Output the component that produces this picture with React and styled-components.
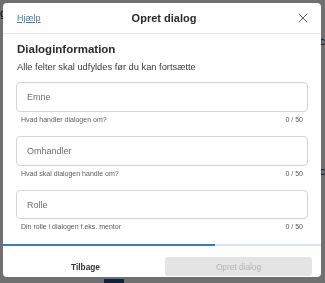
import styled, { createGlobalStyle } from "styled-components";
import { X } from "lucide-react";

const Global = createGlobalStyle`
  html, body {
    margin: 0;
    padding: 0;
    background: #ffffff;
    font-family: "Liberation Sans", Arial, sans-serif;
  }
  * { box-sizing: border-box; }
`;

const Page = styled.div`
  width: 325px;
  height: 283px;
  overflow: hidden;
  background: #ffffff;
  display: flex;
  flex-direction: column;
  padding-top: 7px;
`;

const PageLine = styled.div`
  display: flex;
  justify-content: ${({ $right }) => ($right ? "flex-end" : "flex-start")};
  font-size: 11px;
  line-height: 12px;
  color: #222;
  margin-top: ${({ $gap }) => $gap || 0}px;
`;

const PageButton = styled.div`
  margin: auto 0 0 104px;
  width: 20px;
  height: 4px;
  background: #1f4f8a;
`;

const Overlay = styled.div`
  position: fixed;
  inset: 0;
  background: rgba(0, 0, 0, 0.56);
  padding: 3px 4px 6px 3px;
`;

const Modal = styled.div`
  width: 318px;
  height: 274px;
  background: #ffffff;
  border-radius: 4px;
  display: flex;
  flex-direction: column;
  overflow: hidden;
`;

const Header = styled.div`
  display: grid;
  grid-template-columns: 1fr auto 1fr;
  align-items: center;
  height: 31px;
  padding: 0 10px 0 14px;
  border-bottom: 1px solid #e8e8e8;
  flex-shrink: 0;
`;

const HelpLink = styled.a`
  justify-self: start;
  font-size: 9px;
  color: #3b78c9;
  text-decoration: underline;
  cursor: pointer;
`;

const Title = styled.div`
  font-size: 11px;
  font-weight: 700;
  color: #2b2b2b;
`;

const CloseButton = styled.button`
  justify-self: end;
  border: 0;
  background: none;
  padding: 0;
  display: flex;
  color: #555;
  cursor: pointer;
`;

const Body = styled.div`
  flex: 1;
  padding: 8px 13px 0 13px;
`;

const SectionTitle = styled.div`
  font-size: 11.5px;
  font-weight: 700;
  color: #2b2b2b;
  padding-left: 1px;
  line-height: 14px;
`;

const SectionText = styled.div`
  font-size: 9.3px;
  color: #3a3a3a;
  padding-left: 1px;
  margin-top: 5px;
  line-height: 12px;
`;

const Fields = styled.div`
  display: flex;
  flex-direction: column;
  gap: 12px;
  margin-top: 9px;
`;

const Field = styled.div`
  display: flex;
  flex-direction: column;
`;

const Input = styled.input`
  height: ${({ $h }) => $h || 30}px;
  border: 1px solid #d4d4d4;
  border-radius: 4px;
  padding: 0 10px;
  font-family: inherit;
  font-size: 9px;
  color: #333;
  outline: none;

  &::placeholder {
    color: #6e6e6e;
  }
`;

const Helper = styled.div`
  display: flex;
  justify-content: space-between;
  padding: 0 5px;
  margin-top: 3px;
  font-size: 7px;
  line-height: 9px;
  color: #5a5a5a;
`;

const Progress = styled.div`
  height: 2px;
  background: #d5e4f7;
  flex-shrink: 0;
`;

const ProgressFill = styled.div`
  height: 100%;
  background: #3a78c9;
`;

const Footer = styled.div`
  display: grid;
  grid-template-columns: 1fr 1fr;
  gap: 6px;
  padding: 11px 9px 1px 9px;
  height: 31px;
  flex-shrink: 0;
`;

const Button = styled.button`
  border: 0;
  border-radius: 3px;
  font-family: inherit;
  font-size: 8.3px;
  font-weight: ${({ $primary }) => ($primary ? 400 : 700)};
  background: ${({ $primary }) => ($primary ? "#e4e4e4" : "transparent")};
  color: ${({ $primary }) => ($primary ? "#b4b4b4" : "#333")};
  cursor: pointer;
`;

const fields = [
  { placeholder: "Emne", help: "Hvad handler dialogen om?" },
  { placeholder: "Omhandler", help: "Hvad skal dialogen handle om?" },
  { placeholder: "Rolle", help: "Din rolle i dialogen f.eks. mentor", h: 29 },
];

export default function App() {
  const step = 2;
  const steps = 3;

  return (
    <>
      <Global />
      <Page>
        <PageLine>g</PageLine>
        <PageLine $right $gap={16}>c</PageLine>
        <PageLine $right $gap={118}>c</PageLine>
        <PageButton />
      </Page>
      <Overlay>
        <Modal>
          <Header>
            <HelpLink>Hjælp</HelpLink>
            <Title>Opret dialog</Title>
            <CloseButton aria-label="Luk">
              <X size={16} strokeWidth={1.4} />
            </CloseButton>
          </Header>
          <Body>
            <SectionTitle>Dialoginformation</SectionTitle>
            <SectionText>Alle felter skal udfyldes før du kan fortsætte</SectionText>
            <Fields>
              {fields.map((f) => (
                <Field key={f.placeholder}>
                  <Input placeholder={f.placeholder} $h={f.h} />
                  <Helper>
                    <span>{f.help}</span>
                    <span>0 / 50</span>
                  </Helper>
                </Field>
              ))}
            </Fields>
          </Body>
          <Progress>
            <ProgressFill style={{ width: `${(step / steps) * 100}%` }} />
          </Progress>
          <Footer>
            <Button>Tilbage</Button>
            <Button $primary disabled>
              Opret dialog
            </Button>
          </Footer>
        </Modal>
      </Overlay>
    </>
  );
}
